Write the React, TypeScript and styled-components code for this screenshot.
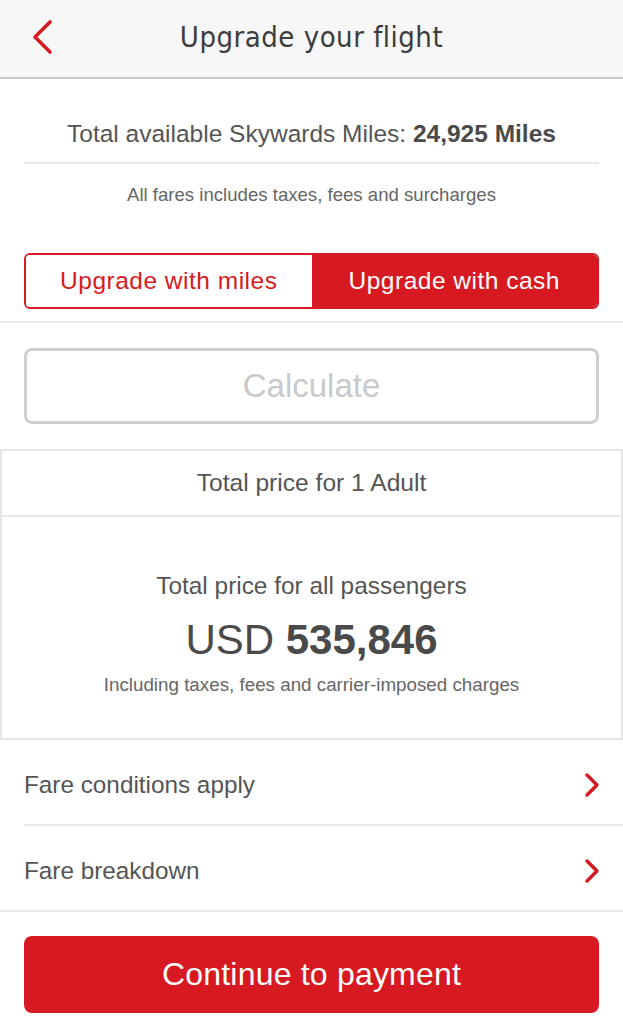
import React from 'react';
import styled, { createGlobalStyle } from 'styled-components';

const red = '#d71921';

const GlobalStyle = createGlobalStyle`
    body {
        margin: 0;
        background: #ffffff;
        font-family: 'Liberation Sans', Arial, sans-serif;
        color: #555555;
    }
`;

const Page = styled.div`
    width: 623px;
    display: flex;
    flex-direction: column;
`;

const Header = styled.header`
    height: 77px;
    background: #f7f7f7;
    border-bottom: 2px solid #c8c8c8;
    display: grid;
    grid-template-columns: 80px 1fr 80px;
    align-items: center;
`;

const BackButton = styled.div`
    display: flex;
    padding-left: 31px;
    padding-bottom: 4px;
`;

const Title = styled.h1`
    margin: 0;
    text-align: center;
    font-family: 'DejaVu Sans Condensed', 'DejaVu Sans', sans-serif;
    font-weight: normal;
    font-size: 29px;
    letter-spacing: 0.5px;
    color: #3c3c3c;
    padding-bottom: 4px;
`;

const MilesSection = styled.section`
    padding: 0 24px;
    display: flex;
    flex-direction: column;
    align-items: stretch;
`;

const MilesLine = styled.div`
    text-align: center;
    font-size: 24.5px;
    line-height: 28px;
    padding: 41px 0 14px;
    border-bottom: 2px solid #e8e8e8;
    b {
        color: #4a4a4a;
    }
`;

const FareNote = styled.div`
    text-align: center;
    font-size: 18.6px;
    line-height: 22px;
    padding-top: 20px;
    color: #666;
`;

const ToggleWrap = styled.div`
    padding: 47px 24px 12px;
    border-bottom: 2px solid #ececec;
`;

const Toggle = styled.div`
    display: grid;
    grid-template-columns: 1fr 1fr;
    height: 56px;
    border: 2px solid ${red};
    border-radius: 6px;
    overflow: hidden;
    box-sizing: border-box;
`;

const ToggleOption = styled.div<{ $active?: boolean }>`
    display: flex;
    align-items: center;
    justify-content: center;
    font-size: 24.5px;
    letter-spacing: 0.5px;
    background: ${(p) => (p.$active ? red : '#fff')};
    color: ${(p) => (p.$active ? '#fff' : red)};
`;

const CalcWrap = styled.div`
    padding: 25px 24px;
`;

const CalcButton = styled.div`
    height: 76px;
    box-sizing: border-box;
    border: 3px solid #cfcfd1;
    border-radius: 8px;
    display: flex;
    align-items: center;
    justify-content: center;
    font-size: 33px;
    color: #c9c9cc;
`;

const PriceBox = styled.section`
    border: 2px solid #e6e6e6;
    display: flex;
    flex-direction: column;
`;

const PriceHeader = styled.div`
    height: 64px;
    display: flex;
    align-items: center;
    justify-content: center;
    font-size: 24.6px;
    border-bottom: 2px solid #e8e8e8;
`;

const PriceBody = styled.div`
    height: 221px;
    box-sizing: border-box;
    padding-top: 55px;
    display: flex;
    flex-direction: column;
    align-items: center;
`;

const PriceLabel = styled.div`
    font-size: 24.4px;
    line-height: 28px;
`;

const PriceAmount = styled.div`
    font-size: 42px;
    line-height: 48px;
    color: #4a4a4a;
    margin: 16px 0 10px;
    b {
        font-weight: bold;
    }
`;

const PriceNote = styled.div`
    font-size: 18.8px;
    line-height: 22px;
    color: #666;
`;

const LinkRow = styled.div<{ $full?: boolean }>`
    height: 78px;
    padding-top: 6px;
    margin-left: ${(p) => (p.$full ? '0' : '24px')};
    padding-left: ${(p) => (p.$full ? '24px' : '0')};
    padding-right: 22px;
    border-bottom: 2px solid #e8e8e8;
    display: flex;
    align-items: center;
    justify-content: space-between;
    font-size: 24.3px;
`;

const Footer = styled.div`
    padding: 24px 24px 10px;
`;

const PayButton = styled.div`
    height: 77px;
    border-radius: 8px;
    background: ${red};
    color: #fff;
    display: flex;
    align-items: center;
    justify-content: center;
    font-size: 32px;
    letter-spacing: 0.2px;
`;

const BackChevron = () => (
    <svg width={22} height={36} viewBox="0 0 22 36">
        <path d="M19 3 L4 18 L19 33" fill="none" stroke={red} strokeWidth={3.6} strokeLinecap="round" strokeLinejoin="round" />
    </svg>
);

const RowChevron = () => (
    <svg width={17} height={26} viewBox="0 0 17 26">
        <path d="M3 3 L13 13 L3 23" fill="none" stroke={red} strokeWidth={3.4} strokeLinecap="round" strokeLinejoin="round" />
    </svg>
);

export default function App() {
    return (
        <Page>
            <GlobalStyle />
            <Header>
                <BackButton>
                    <BackChevron />
                </BackButton>
                <Title>Upgrade your flight</Title>
                <div />
            </Header>
            <MilesSection>
                <MilesLine>
                    Total available Skywards Miles: <b>24,925 Miles</b>
                </MilesLine>
                <FareNote>All fares includes taxes, fees and surcharges</FareNote>
            </MilesSection>
            <ToggleWrap>
                <Toggle>
                    <ToggleOption>Upgrade with miles</ToggleOption>
                    <ToggleOption $active>Upgrade with cash</ToggleOption>
                </Toggle>
            </ToggleWrap>
            <CalcWrap>
                <CalcButton>Calculate</CalcButton>
            </CalcWrap>
            <PriceBox>
                <PriceHeader>Total price for 1 Adult</PriceHeader>
                <PriceBody>
                    <PriceLabel>Total price for all passengers</PriceLabel>
                    <PriceAmount>
                        USD <b>535,846</b>
                    </PriceAmount>
                    <PriceNote>Including taxes, fees and carrier-imposed charges</PriceNote>
                </PriceBody>
            </PriceBox>
            <LinkRow>
                Fare conditions apply
                <RowChevron />
            </LinkRow>
            <LinkRow $full>
                Fare breakdown
                <RowChevron />
            </LinkRow>
            <Footer>
                <PayButton>Continue to payment</PayButton>
            </Footer>
        </Page>
    );
}
